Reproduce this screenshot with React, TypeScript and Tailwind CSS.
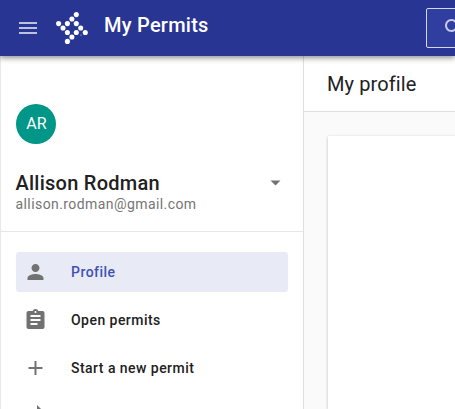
import React from 'react';

const dots = [
  [76.3, 14.6], [71.9, 19], [67.4, 23.6], [76.3, 23.6], [58.6, 23.6], [63, 28],
  [80.7, 28], [67.4, 32.5], [76.3, 32.5], [85.3, 32.5], [71.9, 37], [67.4, 41.4],
];

function Icon({ d, className, viewBox = '0 0 24 24' }: { d: string; className?: string; viewBox?: string }) {
  return (
    <svg viewBox={viewBox} className={className ?? 'size-6 shrink-0 fill-[#727272]'}>
      <path d={d} />
    </svg>
  );
}

const items = [
  { label: 'Profile', active: true, d: 'M12 12c2.21 0 4-1.79 4-4s-1.79-4-4-4-4 1.79-4 4 1.79 4 4 4zm0 2c-2.67 0-8 1.34-8 4v2h16v-2c0-2.66-5.33-4-8-4z' },
  { label: 'Open permits', active: false, d: 'M19 3h-4.18C14.4 1.84 13.3 1 12 1c-1.3 0-2.4.84-2.82 2H5c-1.1 0-2 .9-2 2v14c0 1.1.9 2 2 2h14c1.1 0 2-.9 2-2V5c0-1.1-.9-2-2-2zm-7 0c.55 0 1 .45 1 1s-.45 1-1 1-1-.45-1-1 .45-1 1-1zm2 14H7v-2h7v2zm3-4H7v-2h10v2zm0-4H7V7h10v2z' },
  { label: 'Start a new permit', active: false, d: 'M19 13h-6v6h-2v-6H5v-2h6V5h2v6h6v2z' },
];

export default function App() {
  return (
    <div className="flex h-[409px] w-[455px] flex-col overflow-hidden bg-white font-['Roboto',sans-serif] text-[#212121]">
      <header className="relative z-10 flex h-14 shrink-0 bg-[#283593] shadow-[0_2px_5px_rgba(0,0,0,0.35),0_1px_8px_rgba(0,0,0,0.15)]">
        <div className="flex w-14 shrink-0 items-center pl-4">
          <Icon className="size-6 fill-[#bec2df]" d="M3 18h18v-2H3v2zm0-5h18v-2H3v2zm0-7v2h18V6H3z" />
        </div>
        <svg className="h-14 w-12 shrink-0 fill-white" viewBox="56 0 48 56">
          {dots.map(([x, y]) => <circle key={`${x}-${y}`} cx={x} cy={y} r="2.55" />)}
          <circle cx="81" cy="35.3" r="1" fillOpacity="0.25" />
        </svg>
        <h1 className="mt-[11px] w-[322px] shrink-0 whitespace-nowrap text-[20px] leading-7 font-medium tracking-[0.25px] text-white">My Permits</h1>
        <div className="mt-2 h-10 w-40 shrink-0 rounded-xs border border-[#d4d7eb] bg-[#303f9f] pt-[7px] pl-[15px]">
          <Icon className="size-6 fill-[#c5c9e5]" d="M15.5 14h-.79l-.28-.27C15.41 12.59 16 11.11 16 9.5 16 5.91 13.09 3 9.5 3S3 5.91 3 9.5 5.91 16 9.5 16c1.61 0 3.09-.59 4.23-1.57l.27.28v.79l5 4.99L20.49 19l-4.99-5zm-6 0C7.01 14 5 11.99 5 9.5S7.01 5 9.5 5 14 7.01 14 9.5 11.99 14 9.5 14z" />
        </div>
      </header>
      <div className="flex min-h-0 flex-1">
        <aside className="flex w-[304px] shrink-0 flex-col border-r border-l border-r-[#e0e0e0] border-l-[#e8e8e8]">
          <div className="flex h-[176px] shrink-0 flex-col border-b border-[#e6e6e6] pt-12 pl-[14.5px]">
            <div className="flex size-10 items-center justify-center rounded-full bg-[#009688] pl-[2px] text-[16px] tracking-[0.1px] text-white">AR</div>
            <div className="mt-[27px] flex h-6 items-center justify-between pr-[15.5px]">
              <span className="text-[20px] leading-6 font-medium tracking-[0.25px]">Allison Rodman</span>
              <Icon viewBox="0.5 0.5 24 24" d="M7 10l5 5 5-5z" />
            </div>
            <p className="-mt-px text-[14px] leading-5 tracking-[0.42px] text-[#757575]">allison.rodman@gmail.com</p>
          </div>
          <nav className="flex flex-col gap-2 pt-5 pr-[15px] pl-[14.5px]">
            {items.map((item) => (
              <div key={item.label} className={item.active ? 'flex h-10 shrink-0 items-center gap-[23.5px] rounded-[3px] bg-[#e8eaf6] pl-2 text-[#3f51b5]' : 'flex h-10 shrink-0 items-center gap-[23.5px] pl-2'}>
                <Icon viewBox="0.5 0 24 24" d={item.d} />
                <span className="text-[14px] leading-5 font-medium tracking-[0.46px]">{item.label}</span>
              </div>
            ))}
            <div className="flex h-10 shrink-0 items-center pl-2">
              <Icon d="M13 1v7H5v5h8v6l9-9z" />
            </div>
          </nav>
        </aside>
        <main className="flex min-w-0 flex-1 flex-col bg-[#fafafa]">
          <div className="h-14 shrink-0 border-b border-[#dedede] bg-white pt-[14px] pl-[23px]">
            <h2 className="text-[20px] leading-7 font-normal tracking-[0.1px]">My profile</h2>
          </div>
          <div className="mt-6 -mr-2 ml-6 flex-1 bg-white shadow-[0_1px_3px_rgba(0,0,0,0.25)]" />
        </main>
      </div>
    </div>
  );
}
